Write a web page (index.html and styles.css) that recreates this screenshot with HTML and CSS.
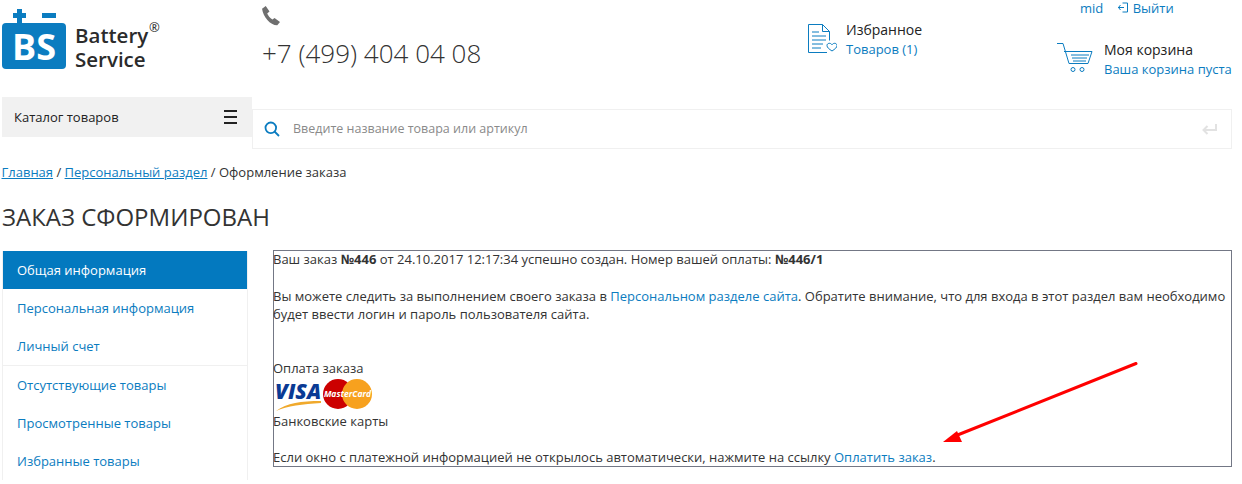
FILE: index.html
```html
<!DOCTYPE html>
<html lang="ru">
<head>
    <meta charset="UTF-8">
    <title>Оформление заказа</title>
    <link rel="stylesheet" href="styles.css">
</head>
<body>
    <header class="top">
        <div class="logo">
            <svg class="logo-mark" width="64" height="70" viewBox="0 0 64 70">
                <path d="M15 9h5v4h4v5h-4v6h-5v-6h-4v-5h4zM40 13h14v5H40z" fill="#0b7cc0"/>
                <rect x="0" y="23" width="64" height="46" rx="4" fill="#0b7cc0"/>
                <text x="32" y="60" class="logo-bs">BS</text>
            </svg>
            <div class="logo-name">Battery<br>Service<span class="logo-reg">®</span></div>
        </div>
        <div class="phone">
            <svg class="phone-icon" width="21" height="21" viewBox="0 0 20 20">
                <path d="M1 3.500 4.500 1l3.600 5.200-2.200 2c.8 2 2.600 4.300 5 5.700l2-1.600 5.200 4-2.600 3C9 19.500 2 11 1 3.500z" fill="#6f6f6f"/>
            </svg>
            <div class="phone-num">+7 (499) 404 04 08</div>
        </div>
        <div class="fav">
            <svg class="fav-icon" width="30" height="30" viewBox="0 0 30 30" fill="none" stroke="#0b7cc0" stroke-width="1">
                <path d="M20 28.500H1.500v-28h14l7 7v9M15.500 .5v7h7M5 8h7M5 12h14M5 16h14M5 20h11M5 24h9"/>
                <path d="M25 27c-3-2-5-3.500-5-5.500 0-2.500 3.500-3 5-.8 1.500-2.200 5-1.700 5 .8 0 2-2 3.500-5 5.500z" fill="#fff"/>
            </svg>
            <div class="head-text">
                <div class="head-title">Избранное</div>
                <a class="link" href="#">Товаров (1)</a>
            </div>
        </div>
        <div class="right-col">
            <div class="user-line">
                <a class="link" href="#">mid</a>
                <a class="link logout" href="#">
                    <svg width="10" height="11" viewBox="0 0 10 11" fill="none" stroke="#0b7cc0">
                        <path d="M4.500 1h5v9h-5M0 5.500h6M2.500 3 .5 5.500l2 2.500"/>
                    </svg>
                    Выйти
                </a>
            </div>
            <div class="cart">
                <svg class="cart-icon" width="36" height="30" viewBox="0 0 36 30" fill="none" stroke="#0b7cc0">
                    <path d="M0 .5h6l6 20h19l4-12H7M14 12h18M15 15h15M16 18h13"/>
                    <circle cx="16" cy="26.500" r="2"/>
                    <circle cx="25" cy="26.500" r="2"/>
                </svg>
                <div class="head-text">
                    <div class="head-title">Моя корзина</div>
                    <a class="link" href="#">Ваша корзина пуста</a>
                </div>
            </div>
        </div>
    </header>

    <div class="bar">
        <div class="catalog">
            <span>Каталог товаров</span>
            <span class="burger"></span>
        </div>
        <div class="search">
            <svg width="16" height="16" viewBox="0 0 16 16" fill="none" stroke="#0b7cc0" stroke-width="1.800">
                <circle cx="6.800" cy="6.800" r="5.300"/>
                <path d="m10.500 10.500 4.500 4.500"/>
            </svg>
            <span class="search-hint">Введите название товара или артикул</span>
            <svg class="enter" width="15" height="11" viewBox="0 0 15 11" fill="none" stroke="#e2e2e2" stroke-width="2">
                <path d="M14 0v6H2M5.500 2 1.500 6l4 4"/>
            </svg>
        </div>
    </div>

    <div class="crumbs">
        <a href="#">Главная</a> / <a href="#">Персональный раздел</a> / Оформление заказа
    </div>

    <h1>Заказ сформирован</h1>

    <div class="main">
        <nav class="side">
            <a class="side-item active" href="#">Общая информация</a>
            <a class="side-item" href="#">Персональная информация</a>
            <a class="side-item" href="#">Личный счет</a>
            <div class="side-line"></div>
            <a class="side-item" href="#">Отсутствующие товары</a>
            <a class="side-item" href="#">Просмотренные товары</a>
            <a class="side-item" href="#">Избранные товары</a>
        </nav>
        <div class="order">
            <p>Ваш заказ <b>№446</b> от 24.10.2017 12:17:34 успешно создан. Номер вашей оплаты: <b>№446/1</b></p>
            <p class="gap">Вы можете следить за выполнением своего заказа в <a class="link" href="#">Персональном разделе сайта</a>. Обратите внимание, что для входа в этот раздел вам необходимо будет ввести логин и пароль пользователя сайта.</p>
            <p class="gap-big">Оплата заказа</p>
            <svg class="cards" width="100" height="35" viewBox="0 -3 100 35">
                <path d="M3 32C14 24 28 22 48 22 48 23 48 23 48 24 30 25 14 27 3 32z" fill="#f0a92c"/>
                <text x="2" y="20" class="visa">VISA</text>
                <circle cx="65" cy="15" r="15" fill="#cc0000"/>
                <circle cx="84" cy="15" r="15" fill="#f7a11e"/>
                <text x="74.500" y="18" class="mc">MasterCard</text>
            </svg>
            <p>Банковские карты</p>
            <p class="gap">Если окно с платежной информацией не открылось автоматически, нажмите на ссылку <a class="link" href="#">Оплатить заказ</a>.</p>
            <svg class="arrow" width="200" height="86" viewBox="0 0 200 86">
                <path d="M196 4.500 15 77" stroke="#ff0000" stroke-width="3" stroke-linecap="round"/>
                <path d="M3 83 17 72l5 11z" fill="#ff0000"/>
            </svg>
        </div>
    </div>
</body>
</html>
```

FILE: styles.css
```css
html, body {
    height: 484px;
    overflow: hidden;
}
body {
    margin: 0;
    padding: 0 10px 0 2px;
    font-family: "Open Sans", sans-serif;
    font-size: 13px;
    line-height: 18px;
    color: #333;
    background: #fff;
}
a {
    color: #0b7cc0;
    text-decoration: none;
}
p {
    margin: 0;
}

.top {
    display: flex;
    height: 97px;
}
.logo {
    display: flex;
    width: 258px;
    flex-shrink: 0;
}
.logo-mark {
    flex-shrink: 0;
}
.logo-bs {
    font-family: "Open Sans", sans-serif;
    font-size: 36px;
    font-weight: 700;
    fill: #fff;
    text-anchor: middle;
}
.logo-name {
    position: relative;
    align-self: flex-start;
    margin: 23px 0 0 9px;
    font-size: 20.500px;
    line-height: 24px;
    font-weight: 600;
    color: #2b2b2b;
}
.logo-reg {
    position: absolute;
    top: -3px;
    left: 74px;
    font-size: 13px;
    line-height: 14px;
    font-weight: 400;
}
.phone {
    width: 547px;
    flex-shrink: 0;
    padding: 5px 0 0 2px;
    box-sizing: border-box;
}
.phone-icon {
    display: block;
    margin-left: -1px;
}
.phone-num {
    margin-top: 11px;
    font-size: 26px;
    line-height: 32px;
    font-weight: 300;
    color: #333;
}
.fav {
    display: flex;
    align-items: flex-start;
    gap: 9px;
    width: 250px;
    flex-shrink: 0;
    padding-top: 21px;
    box-sizing: border-box;
}
.fav-icon {
    margin-top: 3px;
}
.head-title {
    margin-bottom: 1px;
    font-size: 14px;
    color: #222;
}
.right-col {
    flex: 1;
}
.user-line {
    display: flex;
    gap: 15px;
    margin-top: -1px;
    padding-left: 23px;
}
.logout svg {
    margin-right: 1px;
}
.cart {
    display: flex;
    align-items: flex-start;
    gap: 11px;
    margin-top: 24px;
    white-space: nowrap;
}
.cart-icon {
    margin-top: 2px;
}

.bar {
    display: flex;
    align-items: flex-start;
}
.catalog {
    display: flex;
    justify-content: space-between;
    align-items: center;
    width: 250px;
    height: 40px;
    padding: 0 15px 0 12px;
    box-sizing: border-box;
    background: #f1f1f1;
    color: #222;
}
.burger {
    position: relative;
    width: 13px;
    height: 10px;
    border-top: 2px solid #222;
    border-bottom: 2px solid #222;
}
.burger::after {
    content: "";
    position: absolute;
    left: 0;
    right: 0;
    top: 4px;
    height: 2px;
    background: #222;
}
.search {
    display: flex;
    align-items: center;
    flex: 1;
    height: 40px;
    margin-top: 12px;
    padding: 0 14px 0 11px;
    box-sizing: border-box;
    border: 1px solid #f0f0f0;
}
.search-hint {
    flex: 1;
    margin-left: 13px;
    font-size: 12.500px;
    color: #8a8a8a;
}

.crumbs {
    margin: 14px 0 0 -0.500px;
    color: #333;
}
.crumbs a {
    text-decoration: underline;
}

h1 {
    margin: 21px 0 0;
    font-size: 24px;
    line-height: 30px;
    font-weight: 400;
    text-transform: uppercase;
    color: #333;
}

.main {
    display: flex;
    align-items: flex-start;
    margin-top: 18px;
}
.side {
    width: 246px;
    flex-shrink: 0;
    margin-top: 1px;
    border-left: 1px solid #f0f0f0;
    border-right: 1px solid #f0f0f0;
    box-sizing: border-box;
}
.side-item {
    display: block;
    height: 38px;
    padding-left: 14px;
    line-height: 38px;
}
.side-item.active {
    background: #0379bf;
    color: #fff;
}
.side-line {
    height: 1px;
    background: #f0f0f0;
}
.order {
    position: relative;
    flex: 1;
    margin-left: 25px;
    height: 217px;
    box-sizing: border-box;
    box-shadow: inset 0 0 0 1px #737785;
}
.order b {
    font-weight: 700;
}
.gap {
    margin-top: 18px;
}
.order p:nth-child(2) {
    margin-top: 19px;
}
.gap-big {
    margin-top: 36px;
}
.cards {
    display: block;
    margin: -1px 0 1px;
}
.visa {
    font-family: "Open Sans", sans-serif;
    font-size: 21px;
    font-weight: 800;
    font-style: italic;
    fill: #0a3a94;
}
.mc {
    font-family: "Open Sans", sans-serif;
    font-size: 8.500px;
    font-weight: 700;
    font-style: italic;
    fill: #fff;
    text-anchor: middle;
}
.arrow {
    position: absolute;
    left: 667px;
    top: 109px;
}
```
